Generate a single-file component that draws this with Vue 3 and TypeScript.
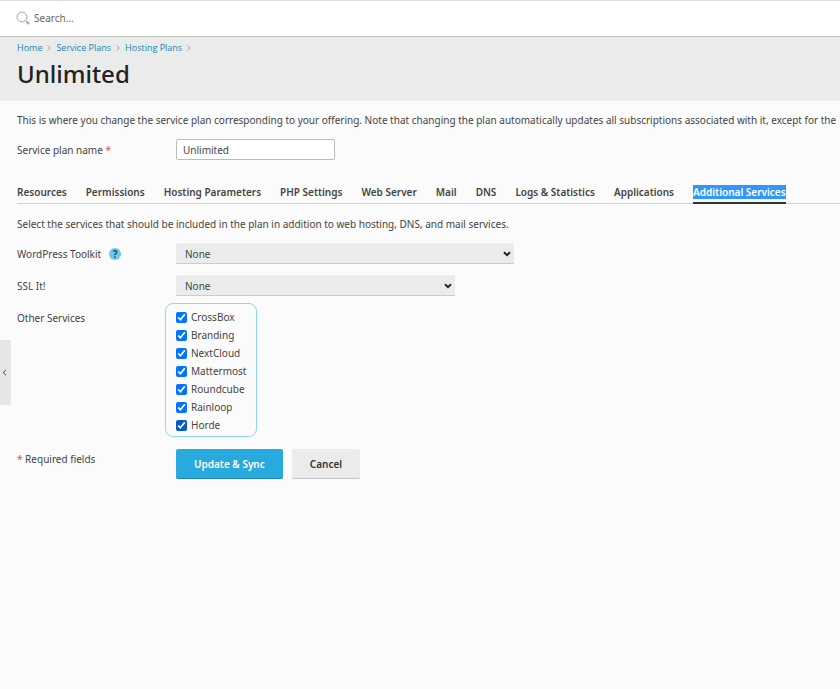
<script setup lang="ts">
import { ref } from 'vue'

interface Service {
  id: string
  name: string
  enabled: boolean
  focused?: boolean
}

const crumbs: string[] = ['Home', 'Service Plans', 'Hosting Plans']
const tabs: string[] = [
  'Resources',
  'Permissions',
  'Hosting Parameters',
  'PHP Settings',
  'Web Server',
  'Mail',
  'DNS',
  'Logs & Statistics',
  'Applications',
  'Additional Services',
]
const activeTab = ref('Additional Services')
const search = ref('')
const planName = ref('Unlimited')
const toolkit = ref('None')
const sslIt = ref('None')
const services = ref<Service[]>([
  { id: 'crossbox', name: 'CrossBox', enabled: true },
  { id: 'branding', name: 'Branding', enabled: true },
  { id: 'nextcloud', name: 'NextCloud', enabled: true },
  { id: 'mattermost', name: 'Mattermost', enabled: true },
  { id: 'roundcube', name: 'Roundcube', enabled: true },
  { id: 'rainloop', name: 'Rainloop', enabled: true },
  { id: 'horde', name: 'Horde', enabled: true, focused: true },
])
</script>

<template>
  <div class="page">
    <label class="search">
      <svg class="search-icon" viewBox="0 0 14 14" aria-hidden="true">
        <circle cx="6" cy="6" r="5" />
        <path d="M9.6 9.6 12.6 12.6" />
        <path class="handle" d="M11 11 12.5 12.5" />
      </svg>
      <input v-model="search" type="text" placeholder="Search..." aria-label="Search" />
    </label>

    <header class="heading">
      <nav class="crumbs">
        <template v-for="crumb in crumbs" :key="crumb">
          <a href="#">{{ crumb }}</a>
          <svg viewBox="0 0 4 6" aria-hidden="true"><path d="M0.7 0.5 3.2 3 0.7 5.5" /></svg>
        </template>
      </nav>
      <h1>Unlimited</h1>
    </header>

    <button class="collapse" type="button" aria-label="Toggle sidebar">
      <svg viewBox="0 0 5 7" aria-hidden="true"><path d="M4 0.8 1.2 3.5 4 6.2" /></svg>
    </button>

    <main>
      <p class="intro">
        This is where you change the service plan corresponding to your offering. Note that changing
        the plan automatically updates all subscriptions associated with it, except for the
      </p>

      <form @submit.prevent>
        <div class="row name-row">
          <label for="plan-name">Service plan name <span class="star">*</span></label>
          <input id="plan-name" v-model="planName" class="text-field" type="text" />
        </div>

        <nav class="tabs">
          <a
            v-for="tab in tabs"
            :key="tab"
            href="#"
            :class="{ active: tab === activeTab }"
            @click.prevent="activeTab = tab"
            ><span>{{ tab }}</span></a
          >
        </nav>

        <p class="hint">
          Select the services that should be included in the plan in addition to web hosting, DNS, and
          mail services.
        </p>

        <div class="row select-row">
          <div class="with-help">
            <label for="toolkit">WordPress Toolkit</label>
            <button class="help" type="button" aria-label="Help">?</button>
          </div>
          <div class="select wide">
            <select id="toolkit" v-model="toolkit">
              <option>None</option>
            </select>
            <svg viewBox="0 0 8 6" aria-hidden="true"><path d="M1 1.2 4 4.2 7 1.2" /></svg>
          </div>
        </div>

        <div class="row select-row">
          <label for="ssl-it">SSL It!</label>
          <div class="select medium">
            <select id="ssl-it" v-model="sslIt">
              <option>None</option>
            </select>
            <svg viewBox="0 0 8 6" aria-hidden="true"><path d="M1 1.2 4 4.2 7 1.2" /></svg>
          </div>
        </div>

        <div class="row services-row">
          <span id="other-services">Other Services</span>
          <div class="services" role="group" aria-labelledby="other-services">
            <label v-for="service in services" :key="service.id">
              <input
                v-model="service.enabled"
                type="checkbox"
                :class="{ focused: service.focused }"
              />
              {{ service.name }}
            </label>
          </div>
        </div>

        <div class="row actions-row">
          <span class="required"><span class="star">*</span> Required fields</span>
          <div class="actions">
            <button class="primary" type="submit">Update &amp; Sync</button>
            <button class="secondary" type="button">Cancel</button>
          </div>
        </div>
      </form>
    </main>
  </div>
</template>

<style>
body {
  margin: 0;
  background: #fbfbfb;
}
</style>

<style scoped>
.page {
  position: relative;
  min-height: 100vh;
  overflow: hidden;
  box-sizing: border-box;
  border-top: 1px solid #e0e0e4;
  color: #444;
  font: 10px/18px 'Noto Sans', 'Open Sans', sans-serif;
}
input,
select,
button {
  box-sizing: border-box;
  margin: 0;
  color: inherit;
  font: inherit;
}
a {
  text-decoration: none;
}
p,
h1 {
  margin: 0;
}
.search {
  display: flex;
  align-items: center;
  gap: 4px;
  height: 33px;
  padding: 0 16px 2px;
  border-bottom: 1px solid #c4c4c4;
  background: #fff;
}
.search-icon {
  width: 14px;
  height: 14px;
  fill: none;
  stroke: #a6a6a6;
  stroke-width: 1;
}
.search-icon .handle {
  stroke-width: 2;
  stroke-linecap: round;
}
.search input {
  flex: 1;
  padding: 0;
  border: 0;
  outline: 0;
  background: transparent;
}
.search input::placeholder {
  color: #666;
}
.heading {
  padding: 2px 17px 10px;
  background: #ebebeb;
}
.crumbs {
  display: flex;
  align-items: center;
  gap: 5px;
  font-family: 'Open Sans', 'Noto Sans', sans-serif;
  font-size: 9px;
}
.crumbs a {
  color: #1c86b3;
}
.crumbs svg {
  width: 4px;
  height: 6px;
  fill: none;
  stroke: #999;
}
h1 {
  color: #222;
  font-size: 24px;
  font-weight: 500;
  line-height: 34px;
}
main {
  padding: 10px 0 20px 17px;
}
.intro {
  white-space: nowrap;
}
.row {
  display: grid;
  grid-template-columns: 159px 1fr;
}
.name-row {
  align-items: center;
  margin-top: 10px;
}
.star {
  color: #d9534f;
}
.text-field {
  width: 159px;
  height: 21px;
  padding: 0 6px;
  border: 1px solid #bbb;
  border-radius: 2px;
  background: #fff;
}
.tabs {
  display: flex;
  gap: 19px;
  margin-top: 23px;
  border-bottom: 1px solid #d4d4d4;
  font-weight: 600;
  white-space: nowrap;
}
.tabs a {
  margin-bottom: -1px;
  padding-bottom: 1px;
  border-bottom: 2px solid transparent;
  color: #444;
}
.tabs a.active {
  border-color: #333;
}
.tabs a.active span {
  background: #3297fd;
  color: #fff;
}
.hint {
  margin-top: 11px;
}
.select-row {
  align-items: center;
  margin-top: 11px;
}
.hint + .select-row {
  margin-top: 10px;
}
.with-help {
  display: flex;
  align-items: center;
  gap: 8px;
}
.help {
  width: 12px;
  height: 12px;
  padding: 0;
  border: 0;
  border-radius: 50%;
  background: #6cc8ee;
  color: #164f68;
  font-weight: 700;
  line-height: 12px;
}
.select {
  display: grid;
  align-items: center;
}
.select select,
.select svg {
  grid-area: 1 / 1;
}
.select svg {
  justify-self: end;
  width: 8px;
  height: 6px;
  margin-right: 3px;
  fill: none;
  stroke: #222;
  stroke-width: 2;
  pointer-events: none;
}
select {
  appearance: none;
  width: 100%;
  height: 21px;
  padding: 1px 16px 0 9px;
  border: 0;
  border-bottom: 1px solid #ccc;
  border-radius: 1px;
  background: #ebebeb;
}
.wide {
  width: 338px;
}
.medium {
  width: 279px;
}
.services-row {
  margin-top: 7px;
}
.services-row > span {
  padding-top: 6px;
}
.services {
  display: grid;
  justify-self: start;
  margin-left: -11px;
  padding: 4px 10px 2px;
  border: 1px solid #8fd6ea;
  border-radius: 8px;
}
.services label {
  display: flex;
  align-items: center;
  gap: 4px;
}
.services input {
  width: 11px;
  height: 11px;
  accent-color: #0075ff;
}
.services input.focused {
  accent-color: #005cc8;
}
.actions-row {
  margin-top: 12px;
}
.required {
  padding-top: 1px;
}
.actions {
  display: flex;
  gap: 9px;
}
.actions button {
  height: 30px;
  border: 0;
  border-bottom: 1px solid #1b88b5;
  border-radius: 2px;
  font-weight: 600;
}
.actions .primary {
  padding: 0 18px;
  background: #28aade;
  color: #fff;
}
.actions .secondary {
  padding: 0 18px;
  border-color: #c4c4c4;
  background: #ebebeb;
  color: #333;
}
.collapse {
  position: absolute;
  top: 339px;
  left: 0;
  width: 11px;
  height: 65px;
  padding: 0;
  border: 0;
  border-radius: 0 2px 2px 0;
  background: #e6e6e6;
  line-height: 0;
}
.collapse svg {
  width: 5px;
  height: 7px;
  margin-right: 2px;
  fill: none;
  stroke: #444;
}
</style>
